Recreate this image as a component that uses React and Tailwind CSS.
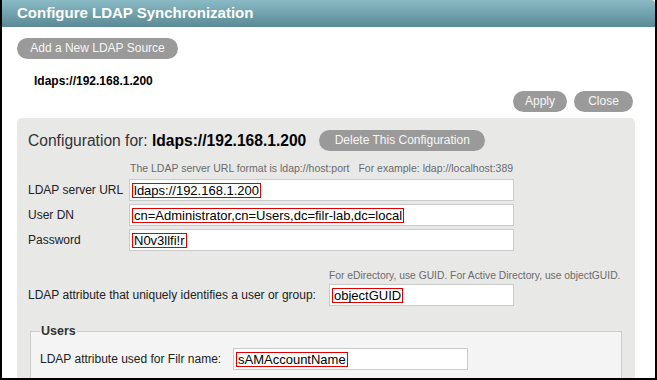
function Pill({ children, className = "" }) {
  return (
    <button
      className={`block h-[21px] rounded-full bg-[#9a9a9a] text-[12px] leading-[21px] text-[#f6f6f6] ${className}`}
    >
      {children}
    </button>
  );
}

function Field({ value, width = "w-[385px]" }) {
  return (
    <div className={`${width} h-[22px] border border-[#cbcbcb] bg-white flex items-center pl-[2px]`}>
      <span className="border border-[#e10000] px-[1px] text-[13px] leading-[13px] text-black whitespace-nowrap">
        {value}
      </span>
    </div>
  );
}

export default function App() {
  const rows = [
    ["LDAP server URL", "ldaps://192.168.1.200"],
    ["User DN", "cn=Administrator,cn=Users,dc=filr-lab,dc=local"],
    ["Password", "N0v3llfi!r"],
  ];

  return (
    <div className="w-[657px] h-[380px] overflow-hidden bg-white border-x-2 border-b-2 border-black font-['Liberation_Sans',Arial,sans-serif]">
      {/* Title bar */}
      <div className="h-[27px] rounded-tr-[4px] bg-linear-to-b from-[#8abac4] to-[#5a8a95] flex items-center pl-[15px] text-[15px] font-bold text-white">
        Configure LDAP Synchronization
      </div>

      <div className="pl-[15px] pr-[20px]">
        <div className="mt-[11px] flex">
          <Pill className="w-[161px]">Add a New LDAP Source</Pill>
        </div>

        <div className="mt-[15px] pl-[17px] text-[12px] leading-[14px] font-bold text-black">
          ldaps://192.168.1.200
        </div>

        <div className="mt-[3px] flex justify-end gap-[7px] pr-[2px]">
          <Pill className="w-[54px]">Apply</Pill>
          <Pill className="w-[59px]">Close</Pill>
        </div>

        {/* Configuration panel */}
        <div className="mt-[6px] rounded-[5px] bg-[#e8e8e7] px-[11px] pt-[12px] pb-[40px]">
          <div className="flex items-center gap-[13px]">
            <div className="text-[15.6px] leading-[18px] text-[#333]">
              Configuration for: <span className="font-bold text-black">ldaps://192.168.1.200</span>
            </div>
            <Pill className="w-[166px]">Delete This Configuration</Pill>
          </div>

          <div className="grid grid-cols-[101px_385px] mt-[11px]">
            <div />
            <div className="pl-[1px] text-[10.5px] leading-[12px] text-[#6b6b6b] whitespace-nowrap">
              The LDAP server URL format is ldap://host:port
              <span className="ml-[9px]">For example: ldap://localhost:389</span>
            </div>
          </div>

          <div className="mt-[5px] flex flex-col gap-[3px]">
            {rows.map(([label, value]) => (
              <div key={label} className="grid grid-cols-[101px_385px] items-center">
                <div className="text-[12px] text-[#222]">{label}</div>
                <Field value={value} />
              </div>
            ))}
          </div>

          <div className="grid grid-cols-[301px_185px] mt-[19px]">
            <div />
            <div className="text-[10.3px] leading-[12px] text-[#6b6b6b] whitespace-nowrap">
              For eDirectory, use GUID. For Active Directory, use objectGUID.
            </div>
          </div>
          <div className="grid grid-cols-[301px_185px] items-center mt-[2px]">
            <div className="text-[12px] text-[#222]">LDAP attribute that uniquely identifies a user or group:</div>
            <Field value="objectGUID" width="w-[185px]" />
          </div>

          <fieldset className="mt-[17px] mx-[2px] border border-[#cccccc] bg-[#f4f4f4] pl-[9px] pt-[9px] pb-[30px]">
            <legend className="px-[1px] text-[12.5px] leading-[16px] font-bold text-[#333]">Users</legend>
            <div className="grid grid-cols-[193px_235px] items-center">
              <div className="text-[12px] text-[#222]">LDAP attribute used for Filr name:</div>
              <Field value="sAMAccountName" width="w-[235px]" />
            </div>
          </fieldset>
        </div>
      </div>
    </div>
  );
}
